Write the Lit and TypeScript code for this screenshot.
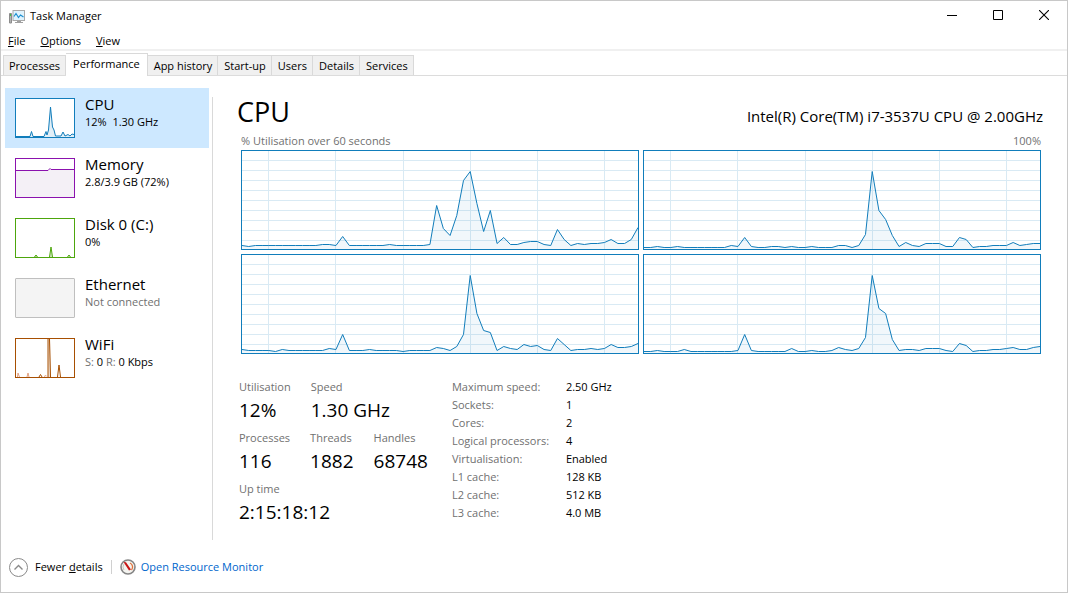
import { LitElement, html, svg, css } from "lit";
import { customElement, property, state } from "lit/decorators.js";
import { classMap } from "lit/directives/class-map.js";

const CORES: number[][] = [
  [4,3,4,4,4,4,4,4,4,4,4,4,5,5,4,13,4,4,4,4,4,4,5,4,4,4,4,4,5,44,21,14,34,69,78,46,18,39,6,12,5,5,7,8,8,5,4,20,10,4,6,5,6,6,7,10,6,6,10,22],
  [2,2,3,2,2,3,2,2,2,2,2,2,2,4,3,12,3,2,2,3,3,2,3,2,2,3,2,2,2,4,4,2,4,15,78,39,30,14,3,7,4,3,6,6,6,3,3,12,10,2,3,3,4,4,4,7,4,5,6,6],
  [4,3,3,3,3,2,4,3,3,3,3,3,3,5,4,19,3,3,3,4,3,3,3,3,2,3,3,3,3,6,5,3,7,19,78,40,23,21,3,7,5,4,9,7,8,4,3,15,9,3,4,4,5,4,5,9,6,6,7,10],
  [2,2,3,2,2,2,4,2,2,2,2,2,2,2,3,19,3,2,2,2,2,2,5,2,2,3,2,2,3,6,4,3,5,16,78,45,40,14,3,4,4,3,5,5,5,3,2,10,8,2,3,3,4,4,5,6,4,4,6,7],
];

const GRID_X = [4, 14, 24, 34, 44, 54];
const GRID_Y = [10, 20, 30, 40, 50, 60, 70, 80, 90];

@customElement("core-chart")
class CoreChart extends LitElement {
  @property({ attribute: false }) values: number[] = [];

  static styles = css`
    :host { display: block; box-sizing: border-box; height: 100px; border: 1px solid #117dbb; background: #fff; }
    svg { display: block; width: 100%; height: 100%; }
    .grid { stroke: #d9eaf4; shape-rendering: crispEdges; }
    .area { fill: #117dbb; fill-opacity: 0.06; }
    .line { fill: none; stroke: #117dbb; stroke-width: 1; }
    line, polyline { vector-effect: non-scaling-stroke; }
  `;

  render() {
    const points = this.values.map((v, i) => `${i},${98.5 - v}`).join(" ");
    return html`
      <svg viewBox="0 0 59 98" preserveAspectRatio="none" aria-hidden="true">
        ${GRID_X.map((x) => svg`<line class="grid" x1=${x} x2=${x} y1="0" y2="98"></line>`)}
        ${GRID_Y.map((y) => svg`<line class="grid" x1="0" x2="59" y1=${y - 0.5} y2=${y - 0.5}></line>`)}
        <polygon class="area" points="0,98 ${points} 59,98"></polygon>
        <polyline class="line" points=${points}></polyline>
      </svg>`;
  }
}

const THUMBS: Record<string, unknown> = {
  cpu: svg`<path d="M0 37.5H14L15.5 32.5L17 37.5H28L30 32.5L31 36L32.5 31L34.5 8L36.5 28L38 31L39.5 37H45L47 33L49 37L52 35.5L54 37L56 35L58 35.5V38H0Z" fill="#117dbb" fill-opacity=".12"></path><path d="M0 37.5H14L15.5 32.5L17 37.5H28L30 32.5L31 36L32.5 31L34.5 8L36.5 28L38 31L39.5 37H45L47 33L49 37L52 35.5L54 37L56 35L58 35.5" fill="none" stroke="#117dbb"></path>`,
  memory: svg`<path d="M0 11.5H32L34 9.5L35 10.5H58V38H0Z" fill="#f4f0f6"></path><path d="M0 11.5H32L34 9.5L35 10.5H58" fill="none" stroke="#8b12ae"></path>`,
  disk: svg`<path d="M18.5 38L20 36L21.5 38M33.5 38L35 28L36.5 38M51.5 38L53 36L54.5 38" fill="#4da60c" fill-opacity=".25" stroke="#4da60c"></path>`,
  ethernet: svg``,
  wifi: svg`<path d="M32 38V0M33.5 0L34.5 38M41.5 38L43 26L44.5 38M23 38L24.5 35.5L26 38" fill="none" stroke="#a74f01"></path><path d="M32 0H34L35 38H32Z" fill="#a74f01" fill-opacity=".15"></path><path d="M1.5 38L2 34L3.5 38M11 38L12 34L13 38M28 37.5L30 36.5L31 37.5" fill="none" stroke="#e0a080"></path>`,
};

@customElement("resource-item")
class ResourceItem extends LitElement {
  @property() kind = "cpu";
  @property() name = "";
  @property({ type: Boolean }) selected = false;

  static styles = css`
    :host { display: block; }
    .item {
      display: flex; align-items: flex-start; gap: 10px; width: 100%; height: 60px; padding: 10px; border: 0;
      background: none; font: inherit; color: inherit; text-align: left;
    }
    .selected { background: #cde8ff; }
    .thumb { flex: none; box-sizing: border-box; width: 60px; height: 40px; border: 1px solid; background: #fff; }
    .cpu { border-color: #117dbb; }
    .memory { border-color: #8b12ae; }
    .disk { border-color: #4da60c; }
    .ethernet { border-color: #bfbfbf; border-radius: 1px; background: #f4f4f4; }
    .wifi { border-color: #a74f01; }
    .text { display: flex; flex-direction: column; margin-top: -3px; white-space: nowrap; }
    .name { font-size: 15px; line-height: 18px; }
    .sub { font-size: 11px; line-height: 18px; white-space: pre; }
  `;

  render() {
    return html`
      <button class=${classMap({ item: true, selected: this.selected })}>
        <svg class="thumb ${this.kind}" viewBox="0 0 58 38" aria-hidden="true">${THUMBS[this.kind]}</svg>
        <span class="text"><span class="name">${this.name}</span><span class="sub"><slot></slot></span></span>
      </button>`;
  }
}

@customElement("app-root")
class AppRoot extends LitElement {
  @state() tab = "Performance";

  static styles = css`
    :host {
      display: flex; flex-direction: column; box-sizing: border-box; min-height: 100vh; border: 1px solid #c8c8c8;
      background: #fff; color: #000; font-family: "Open Sans", "Noto Sans", sans-serif; font-size: 11px; line-height: 16px;
    }
    button { font: inherit; color: inherit; }
    .titlebar { display: flex; align-items: center; height: 31px; padding-left: 8px; }
    .title { flex: 1; margin: 0 0 2px 5px; }
    .control { display: flex; align-self: flex-start; align-items: center; justify-content: center; width: 46px; height: 28px; padding: 0; border: 0; background: none; }
    .menubar { display: flex; gap: 15px; height: 17px; padding: 0 7px; border-bottom: 2px solid #f0f0f0; }
    .menu { padding: 0; border: 0; background: none; line-height: 18px; }
    .tabs { display: flex; align-items: flex-end; margin-top: 2px; padding-left: 2px; border-bottom: 1px solid #dcdcdc; }
    .tab { height: 20px; padding: 0 5px 0 6px; border: 1px solid #d9d9d9; border-width: 1px 1px 0 0; background: #f0f0f0; }
    .tab:first-child { padding-left: 5px; border-left-width: 1px; }
    .tab.active { height: 23px; margin-bottom: -1px; padding: 0 7px 3px; background: #fff; }
    .pane { display: flex; flex: 1; }
    .side { flex: none; width: 204px; padding: 12px 3px 0 4px; }
    .main { flex: 1; min-width: 0; margin: 21px 0 2px; padding: 0 24px; border-left: 1px solid #d9d9d9; }
    .head { display: flex; justify-content: space-between; align-items: baseline; }
    h1 { margin: 0; font-size: 27px; line-height: 30px; font-weight: 400; }
    .model { font-size: 15px; line-height: 20px; }
    .caption { display: flex; justify-content: space-between; margin-top: 6px; padding: 0 2px 0 4px; color: #707070; }
    .charts { display: grid; grid-template-columns: 1fr 1fr; gap: 4px; margin-top: 1px; padding: 0 2px 0 4px; }
    .info { display: flex; gap: 24px; margin-top: 24px; padding-left: 2px; }
    .stats { display: flex; flex-direction: column; gap: 5px; }
    .row { display: flex; gap: 20px; margin: 0; }
    dt { line-height: 18px; color: #707070; }
    dd { margin: 0; font-size: 19px; line-height: 28px; }
    .specs { border-collapse: collapse; align-self: flex-start; }
    .specs th { width: 114px; padding: 0; font-weight: 400; text-align: left; line-height: 18px; color: #707070; }
    .specs td { padding: 0; line-height: 18px; }
    .dim { color: #707070; }
    .footer { display: flex; align-items: center; height: 50px; padding-left: 8px; }
    .fewer { display: flex; align-items: center; gap: 7px; padding: 0; border: 0; background: none; }
    .rule { width: 1px; height: 14px; margin: 0 8px; background: #d0d0d0; }
    .monitor { display: flex; align-items: center; gap: 5px; color: #0066cc; text-decoration: none; }
    svg { display: block; }
  `;

  tabs = ["Processes", "Performance", "App history", "Start-up", "Users", "Details", "Services"];

  specs = [
    ["Maximum speed:", "2.50 GHz"],
    ["Sockets:", "1"],
    ["Cores:", "2"],
    ["Logical processors:", "4"],
    ["Virtualisation:", "Enabled"],
    ["L1 cache:", "128 KB"],
    ["L2 cache:", "512 KB"],
    ["L3 cache:", "4.0 MB"],
  ];

  stats = [
    [["Utilisation", "12%"], ["Speed", "1.30 GHz"]],
    [["Processes", "116"], ["Threads", "1882"], ["Handles", "68748"]],
    [["Up time", "2:15:18:12"]],
  ];

  render() {
    return html`
      <header class="titlebar">
        <svg width="16" height="16" viewBox="0 0 16 16" aria-hidden="true">
          <path d="M.5 4.5h2v9.5h-2z" fill="#b4b4b4" stroke="#8c8c8c"></path>
          <rect x="1" y="5" width="1" height="2" fill="#3fc43f"></rect>
          <rect x="4" y="1.5" width="11.5" height="10" fill="#dff3fd" stroke="#a8a8a8"></rect>
          <path d="M5 7.5L7 4.5L9.5 8.5L11.5 6L14.5 8" fill="none" stroke="#1c8fd0" stroke-width="1.2"></path>
          <path d="M8 12h4v1h2v1H6v-1h2z" fill="#a0a0a0"></path>
        </svg>
        <span class="title">Task Manager</span>
        <button class="control" aria-label="Minimise"><svg width="10" height="10"><path d="M0 5.5H10" stroke="#000"></path></svg></button>
        <button class="control" aria-label="Maximise"><svg width="10" height="10"><path d="M.5 .5H9.5V9.5H.5Z" fill="none" stroke="#000"></path></svg></button>
        <button class="control" aria-label="Close"><svg width="10" height="10"><path d="M0 0L10 10M10 0L0 10" stroke="#000" stroke-width="1.1"></path></svg></button>
      </header>
      <nav class="menubar">
        <button class="menu"><u>F</u>ile</button>
        <button class="menu"><u>O</u>ptions</button>
        <button class="menu"><u>V</u>iew</button>
      </nav>
      <div class="tabs" role="tablist">
        ${this.tabs.map((t) => html`<button role="tab" aria-selected=${t === this.tab} @click=${() => (this.tab = t)}
          class=${classMap({ tab: true, active: t === this.tab })}>${t}</button>`)}
      </div>
      <div class="pane">
        <aside class="side">
          <resource-item kind="cpu" name="CPU" selected>12%  1.30 GHz</resource-item>
          <resource-item kind="memory" name="Memory">2.8/3.9 GB (72%)</resource-item>
          <resource-item kind="disk" name="Disk 0 (C:)">0%</resource-item>
          <resource-item kind="ethernet" name="Ethernet"><span class="dim">Not connected</span></resource-item>
          <resource-item kind="wifi" name="WiFi"><span class="dim">S:</span> 0 <span class="dim">R:</span> 0 Kbps</resource-item>
        </aside>
        <main class="main">
          <div class="head"><h1>CPU</h1><span class="model">Intel(R) Core(TM) i7-3537U CPU @ 2.00GHz</span></div>
          <div class="caption"><span>% Utilisation over 60 seconds</span><span>100%</span></div>
          <div class="charts">${CORES.map((v) => html`<core-chart .values=${v}></core-chart>`)}</div>
          <div class="info">
            <div class="stats">
              ${this.stats.map((row) => html`<dl class="row">${row.map(([k, v]) => html`<div><dt>${k}</dt><dd>${v}</dd></div>`)}</dl>`)}
            </div>
            <table class="specs"><tbody>
              ${this.specs.map(([k, v]) => html`<tr><th scope="row">${k}</th><td>${v}</td></tr>`)}
            </tbody></table>
          </div>
        </main>
      </div>
      <footer class="footer">
        <button class="fewer">
          <svg width="19" height="19" viewBox="0 0 19 19" aria-hidden="true"><circle cx="9.5" cy="9.5" r="9" fill="none" stroke="#8a8a8a"></circle><path d="M5.5 11.5L9.5 7.5L13.5 11.5" fill="none" stroke="#8a8a8a" stroke-width="1.4"></path></svg>
          <span>Fewer <u>d</u>etails</span>
        </button>
        <span class="rule"></span>
        <a class="monitor" href="#">
          <svg width="16" height="16" viewBox="0 0 16 16" aria-hidden="true">
            <circle cx="8" cy="8" r="7" fill="#f4f4f0" stroke="#858585" stroke-width="1.6"></circle>
            <path d="M4 11A5 5 0 0 1 4 5" fill="none" stroke="#c4c4bc"></path>
            <path d="M10 4A4.5 4.5 0 0 1 11.5 11" fill="none" stroke="#e0703a" stroke-width="1.3"></path>
            <path d="M3.5 3L6 3.2L11 10.5L9 11.5Z" fill="#c81414"></path>
          </svg>
          <span>Open Resource Monitor</span>
        </a>
      </footer>`;
  }
}
